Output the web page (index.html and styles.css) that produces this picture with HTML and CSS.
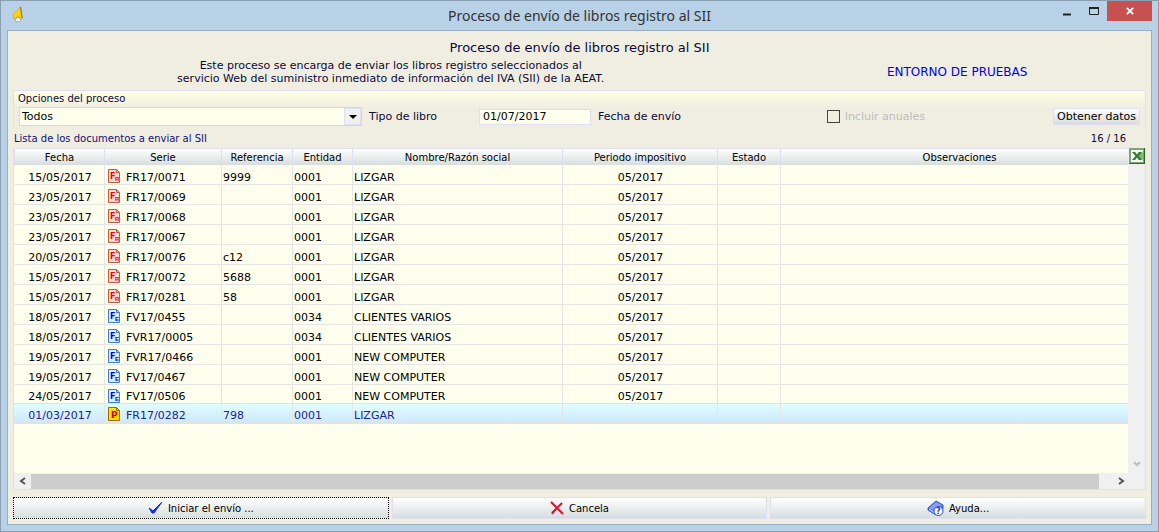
FILE: index.html
```html
<!DOCTYPE html>
<html lang="es">
<head>
<meta charset="utf-8">
<title>Proceso de envío de libros registro al SII</title>
<link rel="stylesheet" href="styles.css">
</head>
<body>
<svg class="defs" aria-hidden="true">
  <symbol id="doc-fr" viewBox="0 0 12 14">
    <path d="M.5.5h8l3 3v10H.5z" fill="#fbdcd4" stroke="#b5603a"/><path d="M8.500.5v3h3" fill="none" stroke="#b5603a"/>
    <text class="glyph-big" x="2" y="10" fill="#f00000">F</text><text class="glyph-small" x="7" y="12" fill="#f00000">R</text>
  </symbol>
  <symbol id="doc-fe" viewBox="0 0 12 14">
    <path d="M.5.5h8l3 3v10H.5z" fill="#dcecfb" stroke="#3f7fc0"/><path d="M8.500.5v3h3" fill="none" stroke="#3f7fc0"/>
    <text class="glyph-big" x="2" y="10" fill="#0000e8">F</text><text class="glyph-small" x="7" y="12" fill="#0000e8">E</text>
  </symbol>
  <symbol id="doc-p" viewBox="0 0 12 14">
    <path d="M.5.5h8l3 3v10H.5z" fill="#ffd800" stroke="#9a6a00"/><path d="M1.500 12V1.500h6" fill="none" stroke="#fff200"/><path d="M8.500.5v3h3" fill="none" stroke="#9a6a00"/>
    <text class="glyph-p" x="3" y="11" fill="#d00000">P</text>
  </symbol>
</svg>
<div class="window">
  <header class="titlebar">
    <svg class="app-icon" viewBox="0 0 12 18"><path d="M8.500 1 10.500 12.500 6 10.500 2 13 1 8.500z" fill="#ffd50a" stroke="#c9a42b" stroke-width=".8"/><path d="M8.500 1 10 12" stroke="#6d5a18" stroke-width=".8"/><path d="M3 13.500l3-2.500 3 3-2 2-3-.5z" fill="#f2f6fa" stroke="#8495a5" stroke-width=".7"/></svg>
    <h1 class="window-title">Proceso de envío de libros registro al SII</h1>
    <div class="window-controls">
      <button class="control" aria-label="Minimizar"><svg width="10" height="12"><path d="M1 9.500h8" stroke="#222" stroke-width="2"/></svg></button>
      <button class="control" aria-label="Maximizar"><svg width="10" height="8"><path d="M.5 1v6.500h9V1" fill="none" stroke="#222"/><path d="M0 1h10" stroke="#222" stroke-width="2"/></svg></button>
      <button class="control control-close" aria-label="Cerrar"><svg width="8" height="8"><path d="M.8.8 7.200 7.200M7.200.8.8 7.200" stroke="#fff" stroke-width="1.900"/></svg></button>
    </div>
  </header>
  <main class="client">
    <section class="intro">
      <h2 class="intro-title">Proceso de envío de libros registro al SII</h2>
      <p class="intro-text">Este proceso se encarga de enviar los libros registro seleccionados al<br>servicio Web del suministro inmediato de información del IVA (SII) de la AEAT.</p>
      <p class="environment">ENTORNO DE PRUEBAS</p>
    </section>
    <section class="options">
      <h3 class="caption">Opciones del proceso</h3>
      <div class="options-row">
        <div class="combo">
          <select class="combo-select" id="tipo"><option>Todos</option></select>
          <span class="combo-arrow"><svg width="8" height="4"><path d="M0 0h8L4 4z"/></svg></span>
        </div>
        <label class="type-label" for="tipo">Tipo de libro</label>
        <input class="date-input" id="fecha" type="text" value="01/07/2017">
        <label for="fecha">Fecha de envío</label>
        <span class="annual"><input class="annual-check" type="checkbox" id="anuales" disabled><label for="anuales">Incluir anuales</label></span>
        <button class="fetch">Obtener datos</button>
      </div>
    </section>
    <div class="list-heading"><h3 class="caption list-caption">Lista de los documentos a enviar al SII</h3><span>16 / 16</span></div>
    <section class="grid">
      <div class="grid-main">
        <table class="docs">
          <colgroup><col class="c-date"><col class="c-series"><col class="c-ref"><col class="c-entity"><col class="c-name"><col class="c-period"><col class="c-state"><col></colgroup>
          <thead><tr><th>Fecha</th><th>Serie</th><th>Referencia</th><th>Entidad</th><th>Nombre/Razón social</th><th>Periodo impositivo</th><th>Estado</th><th class="notes">Observaciones</th></tr></thead>
          <tbody>
            <tr><td>15/05/2017</td><td><svg class="doc"><use href="#doc-fr"/></svg>FR17/0071</td><td>9999</td><td>0001</td><td>LIZGAR</td><td>05/2017</td><td></td><td></td></tr>
            <tr><td>23/05/2017</td><td><svg class="doc"><use href="#doc-fr"/></svg>FR17/0069</td><td></td><td>0001</td><td>LIZGAR</td><td>05/2017</td><td></td><td></td></tr>
            <tr><td>23/05/2017</td><td><svg class="doc"><use href="#doc-fr"/></svg>FR17/0068</td><td></td><td>0001</td><td>LIZGAR</td><td>05/2017</td><td></td><td></td></tr>
            <tr><td>23/05/2017</td><td><svg class="doc"><use href="#doc-fr"/></svg>FR17/0067</td><td></td><td>0001</td><td>LIZGAR</td><td>05/2017</td><td></td><td></td></tr>
            <tr><td>20/05/2017</td><td><svg class="doc"><use href="#doc-fr"/></svg>FR17/0076</td><td>c12</td><td>0001</td><td>LIZGAR</td><td>05/2017</td><td></td><td></td></tr>
            <tr><td>15/05/2017</td><td><svg class="doc"><use href="#doc-fr"/></svg>FR17/0072</td><td>5688</td><td>0001</td><td>LIZGAR</td><td>05/2017</td><td></td><td></td></tr>
            <tr><td>15/05/2017</td><td><svg class="doc"><use href="#doc-fr"/></svg>FR17/0281</td><td>58</td><td>0001</td><td>LIZGAR</td><td>05/2017</td><td></td><td></td></tr>
            <tr><td>18/05/2017</td><td><svg class="doc"><use href="#doc-fe"/></svg>FV17/0455</td><td></td><td>0034</td><td>CLIENTES VARIOS</td><td>05/2017</td><td></td><td></td></tr>
            <tr><td>18/05/2017</td><td><svg class="doc"><use href="#doc-fe"/></svg>FVR17/0005</td><td></td><td>0034</td><td>CLIENTES VARIOS</td><td>05/2017</td><td></td><td></td></tr>
            <tr><td>19/05/2017</td><td><svg class="doc"><use href="#doc-fe"/></svg>FVR17/0466</td><td></td><td>0001</td><td>NEW COMPUTER</td><td>05/2017</td><td></td><td></td></tr>
            <tr><td>19/05/2017</td><td><svg class="doc"><use href="#doc-fe"/></svg>FV17/0467</td><td></td><td>0001</td><td>NEW COMPUTER</td><td>05/2017</td><td></td><td></td></tr>
            <tr class="before-selected"><td>24/05/2017</td><td><svg class="doc"><use href="#doc-fe"/></svg>FV17/0506</td><td></td><td>0001</td><td>NEW COMPUTER</td><td>05/2017</td><td></td><td></td></tr>
            <tr class="selected"><td>01/03/2017</td><td><svg class="doc"><use href="#doc-p"/></svg>FR17/0282</td><td>798</td><td>0001</td><td>LIZGAR</td><td></td><td></td><td></td></tr>
          </tbody>
        </table>
      </div>
      <div class="vscroll">
        <button class="excel" aria-label="Exportar a Excel"><svg width="16" height="16" viewBox="0 0 16 16"><path d="M0 0h16v16H0z" fill="#2c6b22"/><path d="M0 0h15v15H0z" fill="#7fa573"/><path d="M2 2h12v12H2z" fill="#f4f8f2"/><path d="M9 4h5v8H9z" fill="#b9d6b2"/><path d="M10 6h4M10 8h4M10 10h4" stroke="#4f914b"/><path d="M3 4h3l2 2.500L10 4h3L9.500 8l3.500 4h-3L8 9.500 6 12H3l3.500-4z" fill="#2f7a35"/></svg></button>
        <svg class="scroll-down" width="8" height="6"><path d="M1 1l3 3 3-3" fill="none" stroke="#bdbdbd" stroke-width="2"/></svg>
      </div>
      <div class="hscroll">
        <svg width="8" height="8"><path d="M6 1 2 4l4 3" fill="none" stroke="#555" stroke-width="2"/></svg>
        <div class="thumb"></div>
        <svg width="8" height="8"><path d="M1 1l4 3-4 3" fill="none" stroke="#555" stroke-width="2"/></svg>
      </div>
    </section>
    <footer class="actions">
      <button class="action action-focus"><svg width="15" height="14"><path d="M1 7l4 3L14 1 6 12H4z" fill="#0b2ee0" stroke="#0b2ee0"/></svg>Iniciar el envío ...</button>
      <button class="action"><svg width="14" height="14"><path d="M2 13l4-5" stroke="#666" stroke-width="2"/><path d="M1 1l12 12M12 2 2 12" stroke="#d8142f" stroke-width="2"/></svg>Cancela</button>
      <button class="action"><svg width="17" height="16"><path d="M1 8 9 1l7 4v4l-7 6-8-5z" fill="#4b73e6" stroke="#3456c8"/><path d="M2 8 9 2l6 3-7 6z" fill="#7f9ffb"/><path d="M2 9l6 4 2-2" fill="none" stroke="#eef3ff"/><circle cx="11.500" cy="11" r="4.500" fill="#fff" stroke="#2848c0"/><text class="glyph-help" x="9" y="14" fill="#1636b0">?</text></svg>Ayuda...</button>
    </footer>
  </main>
</div>
</body>
</html>
```
FILE: styles.css
```css
* { box-sizing: border-box; }
body { margin: 0; font-family: "DejaVu Sans", Verdana, sans-serif; font-size: 11px; color: #0a0a3c; }
h1, h2, h3, p { margin: 0; font-weight: normal; }
button, input, select { font: inherit; color: #000; margin: 0; padding: 0; border: 0; border-radius: 0; background: none; }
svg { display: block; flex: none; }
.defs { position: absolute; width: 0; height: 0; }
.glyph-big { font: bold 8px "DejaVu Sans", sans-serif; }
.glyph-small { font: bold 6px "Liberation Sans", sans-serif; }
.glyph-p { font: bold 9px "DejaVu Sans", sans-serif; }
.glyph-help { font: bold 8px "DejaVu Sans", sans-serif; }

.window { display: flex; flex-direction: column; min-height: 100vh; padding: 0 6px 6px; border: 1px solid #8a9eb2; background: #b9d1e7; }
.titlebar { display: grid; grid-template-columns: 1fr auto 1fr; height: 29px; flex: none; }
.app-icon { width: 12px; height: 18px; margin: 5px 0 0 5px; }
.window-title { font: 14px/29px "Noto Sans", "Open Sans", sans-serif; color: #333; }
.window-controls { display: flex; justify-content: flex-end; align-items: flex-start; }
.control { display: flex; align-items: center; justify-content: center; width: 27px; height: 20px; }
.control-close { width: 45px; background: #c75050; }

.client { display: flex; flex-direction: column; flex: 1; padding: 7px 5px 5px; border: 1px solid #9aaebf; background: #f0eee1; }
.intro { display: grid; grid-template-columns: 2fr 1fr; text-align: center; padding-bottom: 5px; }
.intro-title { grid-column: 1 / 3; font-size: 13px; line-height: 20px; }
.intro-text { padding-top: 1px; line-height: 13px; }
.environment { font-size: 12px; line-height: 26px; padding-top: 1px; color: #0000f0; }

.options { height: 39px; padding: 0 5px 0 4px; border: 1px solid #dfdff3; border-bottom: 0; background: linear-gradient(#ffffe1, #f0eee1 17px); }
.caption { font-size: 10px; line-height: 15px; }
.options-row { display: flex; align-items: center; height: 20px; padding-top: 1px; }
.combo { position: relative; flex: 0 1 343px; height: 19px; margin-left: 1px; border: 1px solid #d3dadd; background: #ffffee; }
.combo-select { width: 100%; height: 17px; padding-left: 2px; appearance: none; }
.combo-arrow { position: absolute; top: 0; right: 0; display: flex; align-items: center; justify-content: center; width: 17px; height: 17px; border: 1px solid #dfdff3; background: #f0f0f0; pointer-events: none; }
.type-label { margin: 0 42px 0 7px; }
.date-input { width: 112px; height: 16px; margin-right: 7px; padding-left: 3px; border: 1px solid #dfdff3; background: #ffffee; }
.annual { display: flex; align-items: center; gap: 5px; margin-left: auto; color: #bdbdbd; }
.annual-check { width: 13px; height: 13px; appearance: none; border: 1px solid #444; }
.fetch { width: 87px; height: 17px; margin-left: 128px; border: 1px solid #dfdff3; background: linear-gradient(#fff, #d6dedd); white-space: nowrap; }

.list-heading { display: flex; justify-content: space-between; height: 19px; padding: 2px 20px 0 1px; font-size: 10px; line-height: 15px; }
.list-caption { color: #10107a; }

.grid { display: grid; grid-template: 1fr 16px / 1fr 17px; flex: 1; border: 1px solid #dfdff3; border-top: 0; background: #f0f0f0; }
.grid-main { background: #ffffee; }
.docs { width: 100%; table-layout: fixed; border-collapse: separate; border-spacing: 0; color: #000; }
.c-date { width: 90px; }
.c-series { width: 117px; }
.c-ref { width: 71px; }
.c-entity { width: 60px; }
.c-name { width: 210px; }
.c-period { width: 155px; }
.c-state { width: 63px; }
.docs th { height: 17px; padding: 2px 0 0; border-top: 1px solid #dfdff3; border-left: 1px solid #dfdff3; background: linear-gradient(#fff, #d6dedd); font-size: 10px; font-weight: normal; line-height: 14px; }
.docs .notes { padding-left: 10px; }
.docs td { height: 20px; padding: 6px 0 0 1px; border-bottom: 1px solid #e5e5e5; border-left: 1px solid #e5e5e5; line-height: 13px; white-space: nowrap; }
.docs td:first-child { border-left-color: transparent; text-align: center; }
.docs td:nth-child(2) { padding-left: 3px; }
.docs td:nth-child(6) { text-align: center; }
.doc { float: left; width: 12px; height: 14px; margin: -2px 6px 0 0; }
.docs .before-selected td { height: 18px; border-bottom: 0; line-height: 12px; }
.selected { background: linear-gradient(#e0ffff, #cfe6ff); color: #23238a; }
.docs .selected td { height: 21px; padding-top: 5px; border-top: 1px solid #ffff00; border-bottom: 2px solid #dfe3e6; }

.vscroll { display: flex; flex-direction: column; justify-content: space-between; align-items: center; }
.excel { width: 16px; height: 16px; }
.scroll-down { margin-bottom: 6px; }
.hscroll { grid-column: 1 / 3; display: grid; grid-template-columns: 17px 1fr 46px; align-items: center; justify-items: center; }
.thumb { width: 100%; height: 15px; background: #cdcdcd; }

.actions { display: grid; grid-template-columns: 1fr 1fr 1fr; gap: 3px; padding-top: 7px; }
.action { display: flex; align-items: center; justify-content: center; gap: 5px; height: 22px; border: 1px solid #dfdff3; background: linear-gradient(#fff, #d6dedd); font-size: 10px; }
.action-focus { border: 1px dotted #000; }
```
